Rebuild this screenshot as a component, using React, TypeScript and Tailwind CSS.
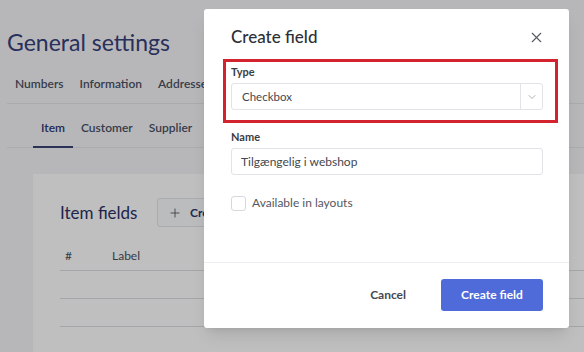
import { X, ChevronDown, Plus } from "lucide-react";

const rows = [0, 1];

export default function App() {
  return (
    <div className="relative h-[352px] w-[584px] overflow-hidden bg-[#f4f5f7] font-['Lato',sans-serif]">
      {/* page behind the dialog */}
      <div className="pl-[7px] pt-[26px]">
        <h1 className="text-[23px] leading-[32px] text-[#37407a]">General settings</h1>
        <div className="mt-[16px] flex gap-[16px] border-b border-[#e3e5ea] pb-[9px] pl-[8px] text-[12px] font-semibold leading-[20px] text-[#4a5064]">
          <span>Numbers</span>
          <span>Information</span>
          <span>Addresses</span>
        </div>
        <div className="flex border-b border-[#e3e5ea] pl-[26px] pt-[14px] text-[12px] font-semibold leading-[20px] text-[#4a5064]">
          <span className="-mb-px border-b-2 border-[#3a4275] px-[8px] pb-[8px] text-[#2f3770]">Item</span>
          <span className="px-[8px] pb-[8px]">Customer</span>
          <span className="px-[8px] pb-[8px]">Supplier</span>
        </div>
        <div className="ml-[26px] mt-[26px] h-[300px] bg-white pl-[27px] pt-[24px]">
          <div className="flex items-center">
            <h2 className="w-[97px] text-[17px] leading-[29px] text-[#2b3166]">Item fields</h2>
            <button className="flex h-[29px] items-center gap-[8px] rounded-[3px] border border-[#e3e5ea] bg-[#fafbfc] px-[10px] text-[12px] font-bold text-[#2f3770]">
              <Plus size={14} strokeWidth={1.5} className="text-[#555]" />
              Create field
            </button>
          </div>
          <div className="mt-[21px] flex border-b border-[#dcdee3] pb-[6px] text-[12px] leading-[16px] text-[#4a4f5f]">
            <span className="w-[52px] pl-[5px]">#</span>
            <span>Label</span>
          </div>
          {rows.map((r) => (
            <div key={r} className="h-[28px] border-b border-[#dcdee3]" />
          ))}
        </div>
      </div>

      {/* overlay */}
      <div className="absolute inset-0 bg-black/[0.25]" />

      {/* dialog */}
      <div className="absolute left-[204px] top-[9px] flex h-[319px] w-[365px] flex-col rounded-[3px] bg-white shadow-lg">
        <div className="flex-1 pl-[27px] pr-[26px] pt-[16px]">
          <div className="flex items-center justify-between">
            <h3 className="text-[17px] font-medium leading-[24px] text-[#2c2f36]">Create field</h3>
            <X size={17} strokeWidth={1.6} className="mr-[-2px] text-[#555a62]" />
          </div>
          {/* red highlight around the type picker */}
          <div className="-ml-[8px] -mr-[15px] mt-[10px] border-[3px] border-[#d2232f] pb-[10px] pl-[5px] pr-[12px] pt-[2px]">
            <div className="text-[11px] font-bold leading-[16px] text-[#3a3d44]">Type</div>
            <div className="mt-[3px] flex h-[27px] items-center rounded-[3px] border border-[#e1e3e7]">
              <span className="flex-1 pl-[10px] text-[11.5px] text-[#44474e]">Checkbox</span>
              <span className="flex h-full w-[22px] items-center justify-center border-l border-[#e1e3e7]">
                <ChevronDown size={12} strokeWidth={1.5} className="text-[#999]" />
              </span>
            </div>
          </div>
          <div className="mt-[6px] text-[11px] font-bold leading-[16px] text-[#3a3d44]">Name</div>
          <div className="mt-[3px] flex h-[27px] items-center rounded-[3px] border border-[#e1e3e7] pl-[9px] text-[12px] text-[#44474e]">
            Tilgængelig i webshop
          </div>
          <div className="mt-[18px] flex h-[20px] items-center gap-[6px] text-[12px] text-[#55585f]">
            <span className="h-[15px] w-[15px] rounded-[3px] border border-[#d5d8dd]" />
            Available in layouts
          </div>
        </div>
        <div className="flex justify-end gap-[19px] border-t border-[#eceef1] pb-[17px] pr-[26px] pt-[16px]">
          <button className="h-[32px] px-[16px] text-[12px] font-bold text-[#45484f]">Cancel</button>
          <button className="h-[32px] w-[102px] rounded-[3px] bg-[#4f6ad9] text-[12px] font-bold text-white">Create field</button>
        </div>
      </div>
    </div>
  );
}
